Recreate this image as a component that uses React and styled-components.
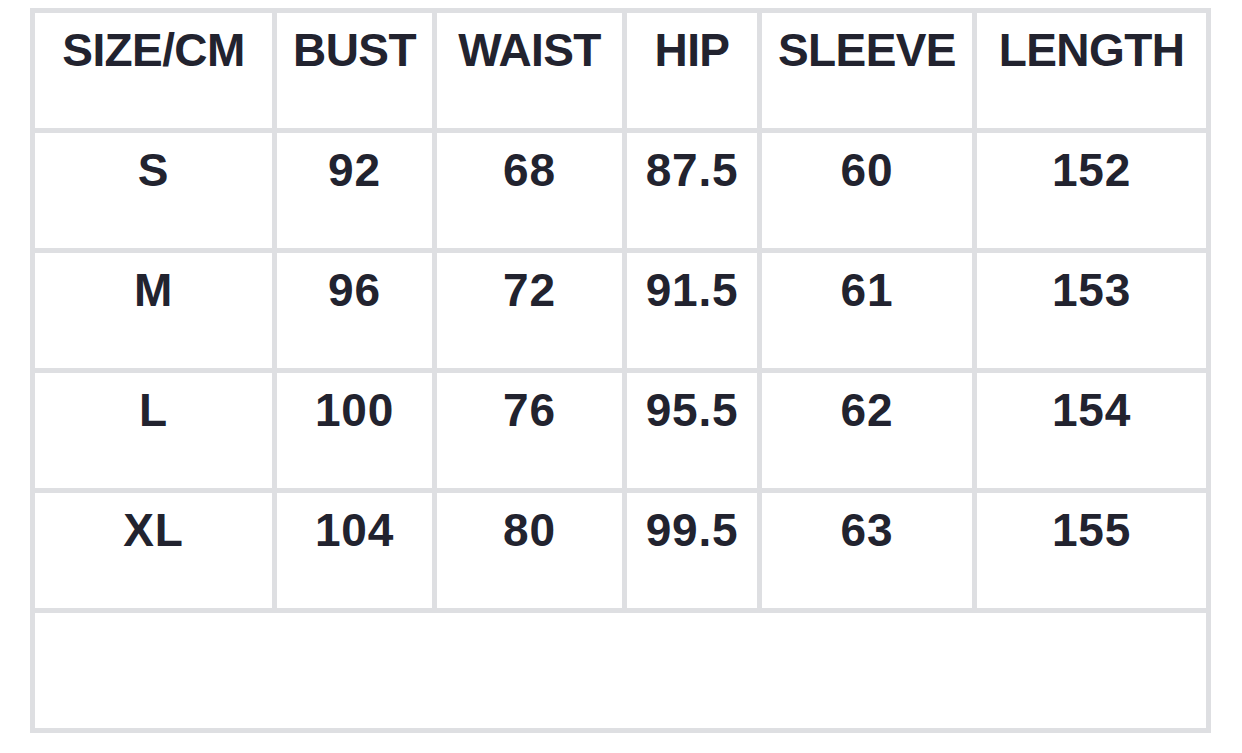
import React from "react";
import styled, { createGlobalStyle } from "styled-components";

const GlobalStyle = createGlobalStyle`
  html, body {
    margin: 0;
    padding: 0;
    background: #ffffff;
  }
`;

const Page = styled.div`
  padding: 8px 0 0 30px;
  font-family: "Liberation Sans", Arial, sans-serif;
`;

const Table = styled.div`
  display: grid;
  grid-template-columns: 237px 155px 185px 130px 210px 229px;
  grid-auto-rows: 115px;
  gap: 5px;
  padding: 5px;
  width: max-content;
  background: #dedfe2;
`;

const Cell = styled.div`
  background: #ffffff;
  padding-top: 14px;
  text-align: center;
  font-size: 46px;
  line-height: 1;
  font-weight: 700;
  color: #22232f;
  letter-spacing: ${(p) => (p.$head ? "-0.6px" : "0.8px")};
`;

const EmptyRow = styled.div`
  grid-column: 1 / -1;
  background: #ffffff;
`;

const headers = ["SIZE/CM", "BUST", "WAIST", "HIP", "SLEEVE", "LENGTH"];

const rows = [
  ["S", "92", "68", "87.5", "60", "152"],
  ["M", "96", "72", "91.5", "61", "153"],
  ["L", "100", "76", "95.5", "62", "154"],
  ["XL", "104", "80", "99.5", "63", "155"],
];

const App = () => (
  <>
    <GlobalStyle />
    <Page>
      <Table>
        {headers.map((h) => (
          <Cell $head key={h}>{h}</Cell>
        ))}
        {rows.map((r) =>
          r.map((v, i) => <Cell key={r[0] + i}>{v}</Cell>)
        )}
        <EmptyRow />
      </Table>
    </Page>
  </>
);

export default App;
